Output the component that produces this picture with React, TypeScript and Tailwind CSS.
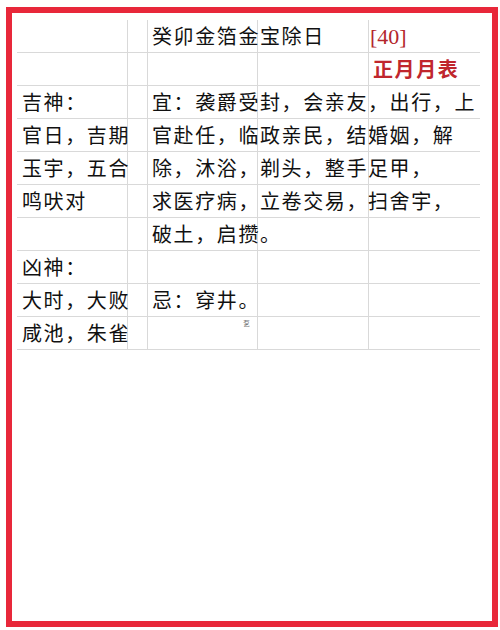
import React from "react";

const rows: [string, string, string][] = [
  ["", "癸卯金箔金宝除日", "[40]"],
  ["", "", "正月月表"],
  ["吉神：", "宜：袭爵受封，会亲友，出行，上", ""],
  ["官日，吉期", "官赴任，临政亲民，结婚姻，解", ""],
  ["玉宇，五合", "除，沐浴，剃头，整手足甲，", ""],
  ["鸣吠对", "求医疗病，立卷交易，扫舍宇，", ""],
  ["", "破土，启攒。", ""],
  ["凶神：", "", ""],
  ["大时，大败", "忌：穿井。", ""],
  ["咸池，朱雀", "", ""],
];

const font = { fontFamily: '"Noto Sans CJK SC", "Noto Sans", sans-serif' };

export default function App() {
  return (
    <div className="w-[500px] h-[630px] bg-white overflow-hidden">
      <div className="ml-[6px] mt-[7px] w-[492px] h-[620px] border-[6px] border-[#e8283a] pl-[5px] pt-[7px]">
        <div className="grid grid-cols-[111px_20px_110px_111px_111px] text-black" style={font}>
          {rows.map((r, i) => (
            <React.Fragment key={i}>
              <div className="h-[33px] border-b border-r border-[#d9d9d9] flex items-center pl-[5px] whitespace-nowrap text-[20px] tracking-[1.6px] text-[#111]">
                {r[0]}
              </div>
              <div className="h-[33px] border-b border-r border-[#d9d9d9]" />
              <div className="relative h-[33px] border-b border-r border-[#d9d9d9] flex items-center pl-[4px] whitespace-nowrap text-[20px] tracking-[1.6px] text-[#111] z-10">
                {r[1]}
                {i === 9 && (
                  <span className="absolute left-[95px] top-[3px] text-[7px] text-[#777] leading-none tracking-normal">
                    乭
                  </span>
                )}
              </div>
              <div className="h-[33px] border-b border-r border-[#d9d9d9]" />
              <div className="h-[33px] border-b border-[#d9d9d9] flex items-center whitespace-nowrap">
                {i === 0 && (
                  <span
                    className="pl-[1px] text-[22px] text-[#b3262c]"
                    style={{ fontFamily: '"Liberation Serif", serif' }}
                  >
                    [40]
                  </span>
                )}
                {i === 1 && (
                  <span className="pl-[4px] text-[20px] tracking-[1.6px] font-bold text-[#c0262d]">
                    正月月表
                  </span>
                )}
              </div>
            </React.Fragment>
          ))}
        </div>
      </div>
    </div>
  );
}
